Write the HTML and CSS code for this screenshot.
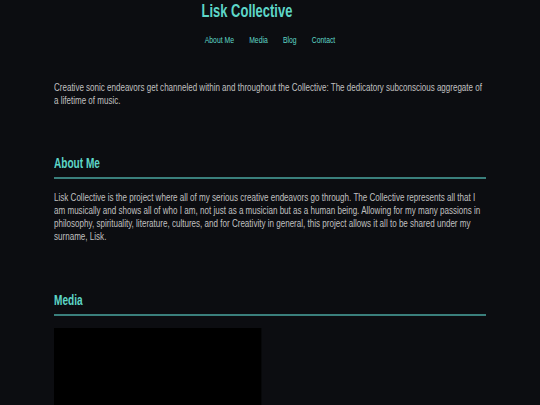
FILE: index.html
```html
<!DOCTYPE html>
<html>
<head>
<meta charset="utf-8">
<link rel="stylesheet" href="styles.css">
</head>
<body>
<div class="page">
<header class="site-header">
  <h1 class="site-title">Lisk Collective</h1>
  <nav class="nav">
    <a href="#">About Me</a>
    <a href="#">Media</a>
    <a href="#">Blog</a>
    <a href="#">Contact</a>
  </nav>
</header>
<main class="content">
  <p class="intro">Creative sonic endeavors get channeled within and throughout the Collective: The dedicatory subconscious aggregate of a lifetime of music.</p>
  <section class="section">
    <h2 class="section-title">About Me</h2>
    <p class="text">Lisk Collective is the project where all of my serious creative endeavors go through. The Collective represents all that I am musically and shows all of who I am, not just as a musician but as a human being. Allowing for my many passions in philosophy, spirituality, literature, cultures, and for Creativity in general, this project allows it all to be shared under my surname, Lisk.</p>
  </section>
  <section class="section">
    <h2 class="section-title">Media</h2>
    <div class="media-box"></div>
  </section>
</main>
</div>
</body>
</html>
```
FILE: styles.css
```css
html, body {
  margin: 0;
  padding: 0;
  background: #0c0d11;
  overflow: hidden;
}
body {
  font-family: "Liberation Sans", Arial, sans-serif;
  color: #c0c0c0;
}
.page {
  width: 750px;
  transform: scaleX(0.72);
  transform-origin: 0 0;
}
.site-header {
  display: flex;
  flex-direction: column;
  align-items: center;
}
.site-title {
  margin: 0 64px 0 0;
  font-size: 18px;
  font-weight: bold;
  color: #5ed6c8;
  line-height: 22px;
}
.nav {
  display: flex;
  gap: 21px;
  margin-top: 12px;
  font-size: 9.5px;
  line-height: 12px;
}
.nav a {
  color: #5ed6c8;
  text-decoration: none;
}
.content {
  padding: 0 75px;
}
.intro {
  margin: 34.5px 0 0;
  font-size: 11.15px;
  line-height: 13.3px;
}
.section {
  margin-top: 47px;
}
.section-title {
  margin: 0;
  font-size: 14px;
  line-height: 18px;
  color: #5ed6c8;
  padding-bottom: 5px;
  border-bottom: 2px solid #3a7f7c;
}
.text {
  margin: 11.5px 0 0;
  font-size: 11.2px;
  line-height: 13.3px;
}
.media-box {
  margin-top: 12px;
  width: 288px;
  height: 120px;
  background: #000;
}
```
